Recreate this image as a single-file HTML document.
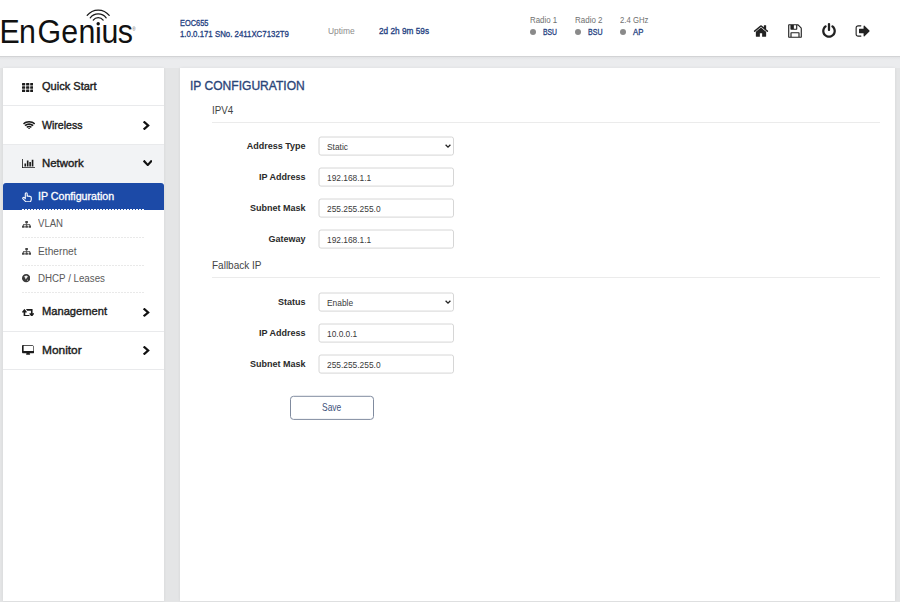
<!DOCTYPE html>
<html lang="en">
<head>
<meta charset="utf-8">
<title>EnGenius - IP Configuration</title>
<style>
html,body{margin:0;padding:0;}
body{width:900px;height:602px;overflow:hidden;background:#e4e5e6;font-family:"Liberation Sans",sans-serif;position:relative;}
.abs{position:absolute;}
.t{position:absolute;white-space:nowrap;line-height:1;transform-origin:0 0;}
.b{font-weight:bold;}
#header{position:absolute;left:0;top:0;width:900px;height:56px;background:#fff;border-bottom:1px solid #d2d3d5;}
#hshadow{position:absolute;left:0;top:57px;width:900px;height:10.5px;background:linear-gradient(#e2e3e5 0,#ebecee 3px,#ebecee 100%);}
#sidebar{position:absolute;left:3px;top:67.5px;width:161px;height:533.5px;background:#fff;box-shadow:0 0 3px rgba(0,0,0,.07);}
#content{position:absolute;left:180px;top:67.5px;width:715px;height:533.5px;background:#fff;box-shadow:0 0 3px rgba(0,0,0,.07);}
.blue{color:#24407f;}
.dot{position:absolute;width:6px;height:6px;border-radius:50%;background:#8a8a8a;}
.sep{position:absolute;left:3px;width:161px;height:1px;background:#e9eaec;}
.dash{position:absolute;left:22px;width:123px;height:1px;background:repeating-linear-gradient(90deg,#e9e9e9 0 2px,transparent 2px 3px);}
.hr{position:absolute;left:212px;width:668px;height:1px;background:#ebebeb;}
.fl{position:absolute;right:594.5px;font-size:9px;font-weight:bold;color:#2a2a2a;line-height:1;white-space:nowrap;text-align:right;}
.inp{position:absolute;left:318.5px;width:133.5px;height:17px;border:1px solid #d0d0d0;border-radius:2px;background:#fff;}
.inp svg{position:absolute;left:125.5px;top:6.700px;}
</style>
</head>
<body>
<div id="header"></div>
<div id="hshadow"></div>
<svg class="abs" style="left:0;top:0" width="150" height="56" viewBox="0 0 150 56">
<text transform="translate(0 42.7) scale(0.92 1)" x="-0.62 20.74 40.67 66.51 85.20 103.14 110.30 128.08" y="0" font-family="Liberation Sans, sans-serif" font-size="33" fill="#111">EnGenius</text>
<rect x="95" y="16" width="7" height="11.1" fill="#fff"/>
<circle cx="98.2" cy="23.8" r="1.7" fill="#111"/>
<g fill="none" stroke="#1a1a1a" stroke-width="1.25" stroke-linecap="round"><path d="M93.24 20.12A6.3 6.3 0 0 1 103.16 20.12"/><path d="M90.24 17.78A10.1 10.1 0 0 1 106.16 17.78"/><path d="M87.17 15.38A14 14 0 0 1 109.23 15.38"/></g>
<text x="132.3" y="31.4" font-family="Liberation Sans, sans-serif" font-size="4.5" fill="#666">®</text>
</svg>
<div class="t blue" style="left:180.30px;top:18.60px;font-size:8.5px;transform:scaleX(0.871);-webkit-text-stroke:0.3px #24407f;">EOC655</div>
<div class="t blue" style="left:180.30px;top:30.30px;font-size:8.5px;transform:scaleX(0.923);-webkit-text-stroke:0.3px #24407f;">1.0.0.171 SNo. 2411XC7132T9</div>
<div class="t " style="left:327.50px;top:26.50px;font-size:8.5px;transform:scaleX(0.992);color:#8c8c8c;">Uptime</div>
<div class="t blue" style="left:379.20px;top:26.50px;font-size:8.5px;transform:scaleX(0.971);-webkit-text-stroke:0.3px #24407f;">2d 2h 9m 59s</div>
<div class="t " style="left:530.30px;top:16.10px;font-size:8.5px;transform:scaleX(0.928);color:#707070;">Radio 1</div>
<div class="dot" style="left:530.0px;top:29px;"></div>
<div class="t blue" style="left:543.00px;top:27.80px;font-size:8.5px;transform:scaleX(0.801);-webkit-text-stroke:0.3px #24407f;">BSU</div>
<div class="t " style="left:575.30px;top:16.10px;font-size:8.5px;transform:scaleX(0.939);color:#707070;">Radio 2</div>
<div class="dot" style="left:575.0px;top:29px;"></div>
<div class="t blue" style="left:588.00px;top:27.80px;font-size:8.5px;transform:scaleX(0.830);-webkit-text-stroke:0.3px #24407f;">BSU</div>
<div class="t " style="left:620.30px;top:16.10px;font-size:8.5px;transform:scaleX(0.911);color:#707070;">2.4 GHz</div>
<div class="dot" style="left:620.0px;top:29px;"></div>
<div class="t blue" style="left:633.30px;top:27.80px;font-size:8.5px;transform:scaleX(0.917);-webkit-text-stroke:0.3px #24407f;">AP</div>
<svg class="abs" style="left:753px;top:22.8px" width="16" height="16" viewBox="0 0 1792 1792"><path fill="#222" d="M1472 992v480q0 26-19 45t-45 19h-384v-384h-256v384h-384q-26 0-45-19t-19-45v-480q0-1 .5-3t.5-3l575-474 575 474q1 2 1 6zm223-69l-62 74q-8 9-21 11h-3q-13 0-21-7l-692-577-692 577q-12 8-24 7-13-2-21-11l-62-74q-8-10-7-23.5t11-21.5l719-599q32-26 76-26t76 26l244 204v-195q0-14 9-23t23-9h192q14 0 23 9t9 23v408l219 182q10 8 11 21.5t-7 23.5z"/></svg>
<svg class="abs" style="left:787.4px;top:22.9px" width="16" height="16" viewBox="0 0 1792 1792"><path fill="#222" d="M512 1536h768v-384h-768v384zm896 0h128v-896q0-14-10-38.5t-20-34.5l-281-281q-10-10-34-20t-39-10v416q0 40-28 68t-68 28h-576q-40 0-68-28t-28-68v-416h-128v1280h128v-416q0-40 28-68t68-28h832q40 0 68 28t28 68v416zm-384-928v-320q0-13-9.5-22.5t-22.5-9.5h-192q-13 0-22.5 9.5t-9.5 22.5v320q0 13 9.5 22.5t22.5 9.5h192q13 0 22.5-9.5t9.5-22.5zm640 32v928q0 40-28 68t-68 28h-1344q-40 0-68-28t-28-68v-1344q0-40 28-68t68-28h928q40 0 88 20t76 48l280 280q28 28 48 76t20 88z"/></svg>
<svg class="abs" style="left:820.7px;top:22.5px" width="16" height="16" viewBox="0 0 1792 1792"><path fill="#222" d="M1664 896q0 156-61 298t-164 245-245 164-298 61-298-61-245-164-164-245-61-298q0-182 80.5-343t226.5-270q43-32 95.5-25t83.5 50q32 42 24.5 94.5t-49.5 84.5q-98 74-151.5 181t-53.5 228q0 104 40.5 198.5t109.5 163.5 163.5 109.5 198.5 40.5 198.5-40.5 163.5-109.5 109.5-163.5 40.5-198.5q0-121-53.5-228t-151.5-181q-42-32-49.5-84.5t24.5-94.5q31-43 84-50t95 25q146 109 226.5 270t80.5 343zm-640-768v640q0 52-38 90t-90 38-90-38-38-90v-640q0-52 38-90t90-38 90 38 38 90z"/></svg>
<svg class="abs" style="left:854.7px;top:23.1px" width="16" height="16" viewBox="0 0 1792 1792"><path fill="#222" d="M704 1440q0 4 1 20t.5 26.5-3 23.5-10 19.5-20.5 6.5h-320q-119 0-203.5-84.5t-84.5-203.5v-704q0-119 84.5-203.5t203.5-84.5h320q13 0 22.5 9.5t9.5 22.5q0 4 1 20t.5 26.5-3 23.5-10 19.5-20.5 6.5h-320q-66 0-113 47t-47 113v704q0 66 47 113t113 47h312l11.5 1 11.5 3 8 5.5 7 9 2 13.5zm928-544q0 26-19 45l-544 544q-19 19-45 19t-45-19-19-45v-288h-448q-26 0-45-19t-19-45v-384q0-26 19-45t45-19h448v-288q0-26 19-45t45-19 45 19l544 544q19 19 19 45z"/></svg>
<div id="sidebar"></div>
<div class="abs" style="left:3px;top:144px;width:161px;height:39px;background:#f2f3f5;"></div>
<div class="abs" style="left:3px;top:183px;width:161px;height:27px;background:#1c4aa7;border-radius:3px 3px 0 0;"></div>
<div class="sep" style="top:105px;"></div>
<div class="sep" style="top:143.5px;"></div>
<div class="sep" style="top:330.5px;"></div>
<div class="sep" style="top:368.5px;"></div>
<div class="dash" style="top:209px;background:repeating-linear-gradient(90deg,#fff 0 2px,transparent 2px 3px);"></div>
<div class="dash" style="top:237px;"></div>
<div class="dash" style="top:264.5px;"></div>
<div class="dash" style="top:291.5px;"></div>
<svg class="abs" style="left:22.0px;top:83.2px" width="11.40" height="8.90"><g fill="#1c1c1c"><rect x="0.00" y="0.00" width="3.21" height="2.40" rx=".5"/><rect x="4.09" y="0.00" width="3.21" height="2.40" rx=".5"/><rect x="8.19" y="0.00" width="3.21" height="2.40" rx=".5"/><rect x="0.00" y="3.25" width="3.21" height="2.40" rx=".5"/><rect x="4.09" y="3.25" width="3.21" height="2.40" rx=".5"/><rect x="8.19" y="3.25" width="3.21" height="2.40" rx=".5"/><rect x="0.00" y="6.50" width="3.21" height="2.40" rx=".5"/><rect x="4.09" y="6.50" width="3.21" height="2.40" rx=".5"/><rect x="8.19" y="6.50" width="3.21" height="2.40" rx=".5"/></g></svg>
<div class="t " style="left:41.70px;top:81.37px;font-size:11.5px;transform:scaleX(0.960);color:#1c1c1c;-webkit-text-stroke:0.4px #1c1c1c;">Quick Start</div>
<svg class="abs" style="left:22.50px;top:120.80px" width="12.20" height="8.50" viewBox="42 128 1964 1395" preserveAspectRatio="none"><path fill="#1c1c1c" d="M1024 1523q-20 0-93-73.5t-73-93.5q0-32 62.5-54t103.5-22 103.5 22 62.5 54q0 20-73 93.5t-93 73.5zm270-271q-2 0-40-25t-101.5-50-128.5-25-128.5 25-101 50-40.5 25q-18 0-93.5-75t-75.5-93q0-13 10-23 78-77 196-121t233-44 233 44 196 121q10 10 10 23 0 18-75.5 93t-93.5 75zm273-272q-11 0-23-8-136-105-252-154.5t-268-49.5q-85 0-170.5 22t-149 53-113.5 62-79 53-31 22q-17 0-92-75t-75-93q0-12 10-22 132-132 320-205t380-73 380 73 320 205q10 10 10 22 0 18-75 93t-92 75zm271-271q-11 0-22-9-179-157-371.5-236.5t-420.5-79.5-420.5 79.5-371.5 236.5q-11 9-22 9-17 0-92.5-75t-75.5-93q0-13 10-23 187-186 445-288t527-102 527 102 445 288q10 10 10 23 0 18-75.5 93t-92.5 75z"/></svg>
<div class="t " style="left:42.00px;top:120.07px;font-size:11.5px;transform:scaleX(0.919);color:#1c1c1c;-webkit-text-stroke:0.4px #1c1c1c;">Wireless</div>
<svg class="abs" style="left:143.30px;top:121.30px" width="6.70" height="9.00" viewBox="90 26 1036 1612" preserveAspectRatio="none"><path fill="#111" d="M1107 877l-742 742q-19 19-45 19t-45-19l-166-166q-19-19-19-45t19-45l531-531-531-531q-19-19-19-45t19-45l166-166q19-19 45-19t45 19l742 742q19 19 19 45t-19 45z"/></svg>
<svg class="abs" style="left:21.70px;top:159.20px" width="13.00" height="9.10" viewBox="0 128 2048 1536" preserveAspectRatio="none"><path fill="#1c1c1c" d="M640 896v512h-256v-512h256zm384-512v1024h-256v-1024h256zm1024 1152v128h-2048v-1536h128v1408h1920zm-640-896v768h-256v-768h256zm384-384v1152h-256v-1152h256z"/></svg>
<div class="t " style="left:42.00px;top:158.37px;font-size:11.5px;transform:scaleX(0.989);color:#1c1c1c;-webkit-text-stroke:0.4px #1c1c1c;">Network</div>
<svg class="abs" style="left:142.50px;top:160.00px" width="9.50" height="6.40" viewBox="90 533 1612 1035" preserveAspectRatio="none"><path fill="#111" d="M1683 808l-742 741q-19 19-45 19t-45-19l-742-741q-19-19-19-45.5t19-45.5l166-165q19-19 45-19t45 19l531 531 531-531q19-19 45-19t45 19l166 165q19 19 19 45.5t-19 45.5z"/></svg>
<svg class="abs" style="left:21.600px;top:191.800px" width="10" height="10.4" viewBox="0 0 10 10.4"><path d="M3.3 6.700V1.700a.95.95 0 0 1 1.9 0V4.300q.65-.45 1.3 .05q.6-.4 1.2 .1q1.5-.15 1.6 1.300V7.600L8.5 9.800H3.900L1 6.900a.92.920 0 0 1 1.3-1.300z" fill="none" stroke="#f2f5fc" stroke-width="1.150" stroke-linejoin="round"/></svg>
<div class="t " style="left:38.00px;top:191.94px;font-size:10px;transform:scaleX(1.065);color:#fff;-webkit-text-stroke:0.3px #fff;">IP Configuration</div>
<svg class="abs" style="left:22.00px;top:220.80px" width="9.20" height="6.80" viewBox="0 128 1792 1536" preserveAspectRatio="none"><path fill="#444" d="M1792 1248v320q0 40-28 68t-68 28h-320q-40 0-68-28t-28-68v-320q0-40 28-68t68-28h96v-192h-512v192h96q40 0 68 28t28 68v320q0 40-28 68t-68 28h-320q-40 0-68-28t-28-68v-320q0-40 28-68t68-28h96v-192h-512v192h96q40 0 68 28t28 68v320q0 40-28 68t-68 28h-320q-40 0-68-28t-28-68v-320q0-40 28-68t68-28h96v-192q0-52 38-90t90-38h512v-192h-96q-40 0-68-28t-28-68v-320q0-40 28-68t68-28h320q40 0 68 28t28 68v320q0 40-28 68t-68 28h-96v192h512q52 0 90 38t38 90v192h96q40 0 68 28t28 68z"/></svg>
<div class="t " style="left:38.30px;top:219.13px;font-size:10px;transform:scaleX(0.958);color:#5a5a5a;">VLAN</div>
<svg class="abs" style="left:22.00px;top:248.20px" width="9.20" height="6.80" viewBox="0 128 1792 1536" preserveAspectRatio="none"><path fill="#444" d="M1792 1248v320q0 40-28 68t-68 28h-320q-40 0-68-28t-28-68v-320q0-40 28-68t68-28h96v-192h-512v192h96q40 0 68 28t28 68v320q0 40-28 68t-68 28h-320q-40 0-68-28t-28-68v-320q0-40 28-68t68-28h96v-192h-512v192h96q40 0 68 28t28 68v320q0 40-28 68t-68 28h-320q-40 0-68-28t-28-68v-320q0-40 28-68t68-28h96v-192q0-52 38-90t90-38h512v-192h-96q-40 0-68-28t-28-68v-320q0-40 28-68t68-28h320q40 0 68 28t28 68v320q0 40-28 68t-68 28h-96v192h512q52 0 90 38t38 90v192h96q40 0 68 28t28 68z"/></svg>
<div class="t " style="left:38.30px;top:246.63px;font-size:10px;transform:scaleX(1.020);color:#5a5a5a;">Ethernet</div>
<svg class="abs" style="left:21.900px;top:274.400px" width="8.3" height="8.3" viewBox="0 0 8.3 8.3"><circle cx="4.150" cy="4.150" r="4.150" fill="#3a3a3a"/><path d="M2.1 2.400L4.2 1.5 6 2.5 4.8 4.1 3.7 5.4 3 3.700z" fill="#fff" opacity=".92"/><path d="M4.9 5.900l.9-.5.3 .9-.8 .6z" fill="#fff" opacity=".7"/></svg>
<div class="t " style="left:38.30px;top:273.94px;font-size:10px;transform:scaleX(0.974);color:#5a5a5a;">DHCP / Leases</div>
<svg class="abs" style="left:22.00px;top:308.70px" width="12.20" height="7.70" viewBox="0 384 1920 1152" preserveAspectRatio="none"><path fill="#1c1c1c" d="M1280 1504q0 13-9.5 22.5t-22.5 9.5h-960q-8 0-13.5-2t-9-7-5.5-8-3-11.5-1-11.5v-13-11-160-416h-192q-26 0-45-19t-19-45q0-24 15-41l320-384q19-22 49-22t49 22l320 384q15 17 15 41 0 26-19 45t-45 19h-192v384h576q16 0 25 11l160 192q7 10 7 21zm640-416q0 24-15 41l-320 384q-20 23-49 23t-49-23l-320-384q-15-17-15-41 0-26 19-45t45-19h192v-384h-576q-16 0-25-12l-160-192q-7-9-7-20 0-13 9.5-22.5t22.5-9.5h960q8 0 13.5 2t9 7 5.5 8 3 11.5 1 11.5v13 11 160 416h192q26 0 45 19t19 45z"/></svg>
<div class="t " style="left:42.00px;top:306.37px;font-size:11.5px;transform:scaleX(0.968);color:#1c1c1c;-webkit-text-stroke:0.4px #1c1c1c;">Management</div>
<svg class="abs" style="left:143.30px;top:308.00px" width="6.70" height="8.80" viewBox="90 26 1036 1612" preserveAspectRatio="none"><path fill="#111" d="M1107 877l-742 742q-19 19-45 19t-45-19l-166-166q-19-19-19-45t19-45l531-531-531-531q-19-19-19-45t19-45l166-166q19-19 45-19t45 19l742 742q19 19 19 45t-19 45z"/></svg>
<svg class="abs" style="left:22.00px;top:345.30px" width="12.20" height="9.70" viewBox="-64 0 1920 1664" preserveAspectRatio="none"><path fill="#1c1c1c" fill-rule="evenodd" d="M1728 992v-832q0-13-9.5-22.5t-22.5-9.5h-1472q-13 0-22.5 9.5t-9.5 22.5v832q0 13 9.5 22.5t22.5 9.5h1472q13 0 22.5-9.5t9.5-22.5zm128-832v1088q0 66-47 113t-113 47h-544q0 37 16 77.5t32 71 16 43.5q0 26-19 45t-45 19h-512q-26 0-45-19t-19-45q0-14 16-44t32-70 16-78h-544q-66 0-113-47t-47-113v-1088q0-66 47-113t113-47h1472q66 0 113 47t47 113z"/></svg>
<div class="t " style="left:42.00px;top:344.77px;font-size:11.5px;transform:scaleX(1.035);color:#1c1c1c;-webkit-text-stroke:0.4px #1c1c1c;">Monitor</div>
<svg class="abs" style="left:143.30px;top:345.80px" width="6.70" height="9.00" viewBox="90 26 1036 1612" preserveAspectRatio="none"><path fill="#111" d="M1107 877l-742 742q-19 19-45 19t-45-19l-166-166q-19-19-19-45t19-45l531-531-531-531q-19-19-19-45t19-45l166-166q19-19 45-19t45 19l742 742q19 19 19 45t-19 45z"/></svg>
<div id="content"></div>
<div class="t " style="left:190.30px;top:79.30px;font-size:13px;transform:scaleX(0.927);color:#2a4578;-webkit-text-stroke:0.35px #2a4578;">IP CONFIGURATION</div>
<div class="t " style="left:212.00px;top:105.17px;font-size:11.5px;transform:scaleX(0.854);color:#444;">IPV4</div>
<div class="hr" style="top:121.500px;"></div>
<div class="t " style="left:212.00px;top:259.67px;font-size:11.5px;transform:scaleX(0.870);color:#444;">Fallback IP</div>
<div class="hr" style="top:277px;"></div>
<svg class="abs" style="left:0;top:0" width="900" height="602" viewBox="0 0 900 602"><rect x="319" y="137.0" width="134.5" height="18.1" rx="2" fill="#fff" stroke="#d6d6d6"/><path d="M445.6 144.8l2.4 2.4 2.4-2.4" fill="none" stroke="#222" stroke-width="1.3"/><rect x="319" y="168.0" width="134.5" height="18.1" rx="2" fill="#fff" stroke="#d6d6d6"/><rect x="319" y="199.0" width="134.5" height="18.1" rx="2" fill="#fff" stroke="#d6d6d6"/><rect x="319" y="230.0" width="134.5" height="18.1" rx="2" fill="#fff" stroke="#d6d6d6"/><rect x="319" y="293.0" width="134.5" height="18.1" rx="2" fill="#fff" stroke="#d6d6d6"/><path d="M445.6 300.8l2.4 2.4 2.4-2.4" fill="none" stroke="#222" stroke-width="1.3"/><rect x="319" y="324.0" width="134.5" height="18.1" rx="2" fill="#fff" stroke="#d6d6d6"/><rect x="319" y="355.0" width="134.5" height="18.1" rx="2" fill="#fff" stroke="#d6d6d6"/><rect x="290.5" y="396.3" width="83" height="23.1" rx="3" fill="#fff" stroke="#808b9f"/></svg>
<div class="fl" style="top:142.18px;">Address Type</div>
<div class="t " style="left:326.80px;top:142.90px;font-size:8.5px;transform:scaleX(0.985);color:#3a3a3a;">Static</div>
<div class="fl" style="top:173.18px;">IP Address</div>
<div class="t " style="left:326.80px;top:173.90px;font-size:8.5px;transform:scaleX(0.985);color:#3a3a3a;">192.168.1.1</div>
<div class="fl" style="top:204.18px;">Subnet Mask</div>
<div class="t " style="left:326.80px;top:204.90px;font-size:8.5px;transform:scaleX(0.985);color:#3a3a3a;">255.255.255.0</div>
<div class="fl" style="top:235.18px;">Gateway</div>
<div class="t " style="left:326.80px;top:235.90px;font-size:8.5px;transform:scaleX(0.985);color:#3a3a3a;">192.168.1.1</div>
<div class="fl" style="top:298.18px;">Status</div>
<div class="t " style="left:326.80px;top:298.90px;font-size:8.5px;transform:scaleX(0.985);color:#3a3a3a;">Enable</div>
<div class="fl" style="top:329.18px;">IP Address</div>
<div class="t " style="left:326.80px;top:329.90px;font-size:8.5px;transform:scaleX(0.985);color:#3a3a3a;">10.0.0.1</div>
<div class="fl" style="top:360.18px;">Subnet Mask</div>
<div class="t " style="left:326.80px;top:360.90px;font-size:8.5px;transform:scaleX(0.985);color:#3a3a3a;">255.255.255.0</div>
<div class="t " style="left:322.20px;top:403.17px;font-size:10.2px;transform:scaleX(0.830);color:#40527a;">Save</div>
</body>
</html>
